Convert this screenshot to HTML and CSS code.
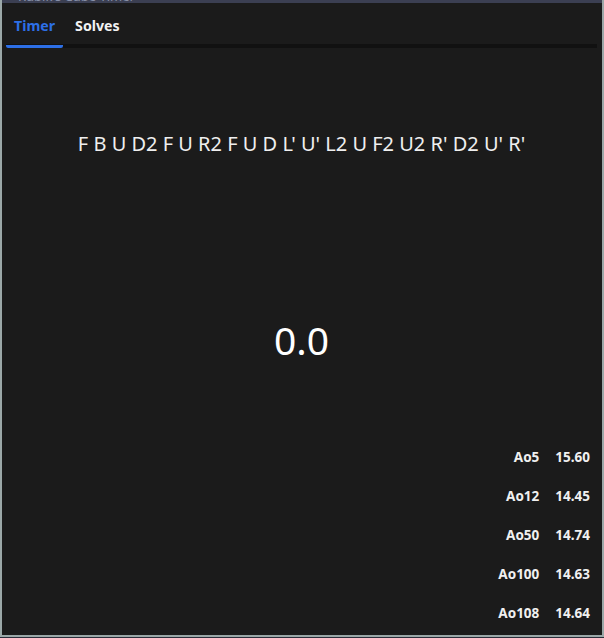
FILE: index.html
```html
<!DOCTYPE html>
<html>
<head>
<meta charset="utf-8">
<link rel="stylesheet" href="styles.css">
</head>
<body>
<div class="titlebar"><span class="title-text">Rubik's Cube Timer</span></div>
<div class="panel">
  <nav class="tabs">
    <div class="tab active">Timer</div>
    <div class="tab">Solves</div>
  </nav>
  <main class="timer-view">
    <div class="scramble">F B U D2 F U R2 F U D L' U' L2 U F2 U2 R' D2 U' R'</div>
    <div class="time">0.0</div>
    <div class="stats">
      <div class="stat-label">Ao5</div><div class="stat-value">15.60</div>
      <div class="stat-label">Ao12</div><div class="stat-value">14.45</div>
      <div class="stat-label">Ao50</div><div class="stat-value">14.74</div>
      <div class="stat-label">Ao100</div><div class="stat-value">14.63</div>
      <div class="stat-label">Ao108</div><div class="stat-value">14.64</div>
    </div>
  </main>
</div>
<div class="bottom-edge"></div>
</body>
</html>
```
FILE: styles.css
```css
html, body {
  margin: 0;
  padding: 0;
}
body {
  width: 604px;
  height: 638px;
  background: #9ba8a8;
  font-family: "Noto Sans", "Open Sans", sans-serif;
  overflow: hidden;
  display: flex;
  flex-direction: column;
}
.titlebar {
  height: 3px;
  background: #3b3f52;
  overflow: hidden;
  margin-left: 2px;
  margin-right: 2px;
}
.title-text {
  display: block;
  margin-top: -11px;
  padding-left: 16px;
  font-size: 13px;
  line-height: 14px;
  color: #8890a8;
}
.panel {
  margin: 0 2px;
  height: 632px;
  background: #1b1b1b;
  display: flex;
  flex-direction: column;
  padding: 0 5px 0 4px;
  box-sizing: border-box;
}
.bottom-edge {
  margin-top: 2px;
  height: 1px;
  background: #2a2e3a;
}
.tabs {
  display: flex;
  height: 45px;
  box-sizing: border-box;
  border-bottom: 4px solid #111111;
  align-items: stretch;
}
.tab {
  padding: 3px 8px 0;
  font-size: 14.2px;
  font-weight: 700;
  color: #f2f2f2;
  display: flex;
  align-items: center;
  margin-bottom: -4px;
  border-bottom: 3px solid transparent;
  margin-right: 4px;
}
.tab.active {
  color: #2d6fe6;
  border-bottom-color: #2d6fe6;
  border-radius: 2px;
}
.timer-view {
  flex: 1;
  display: flex;
  flex-direction: column;
  align-items: stretch;
}
.scramble {
  margin-top: 82px;
  text-align: center;
  font-size: 20px;
  color: #efefef;
  line-height: 28px;
}
.time {
  margin-top: 157px;
  text-align: center;
  font-size: 39px;
  line-height: 50px;
  color: #ffffff;
}
.stats {
  margin-top: auto;
  margin-bottom: 13px;
  align-self: flex-end;
  display: grid;
  grid-template-columns: auto auto;
  column-gap: 16px;
  row-gap: 21px;
  padding-right: 7px;
  font-size: 13.5px;
  font-weight: 700;
  color: #f0f0f0;
  line-height: 18px;
}
.stat-label {
  text-align: right;
}
.stat-value {
  text-align: left;
}
```
